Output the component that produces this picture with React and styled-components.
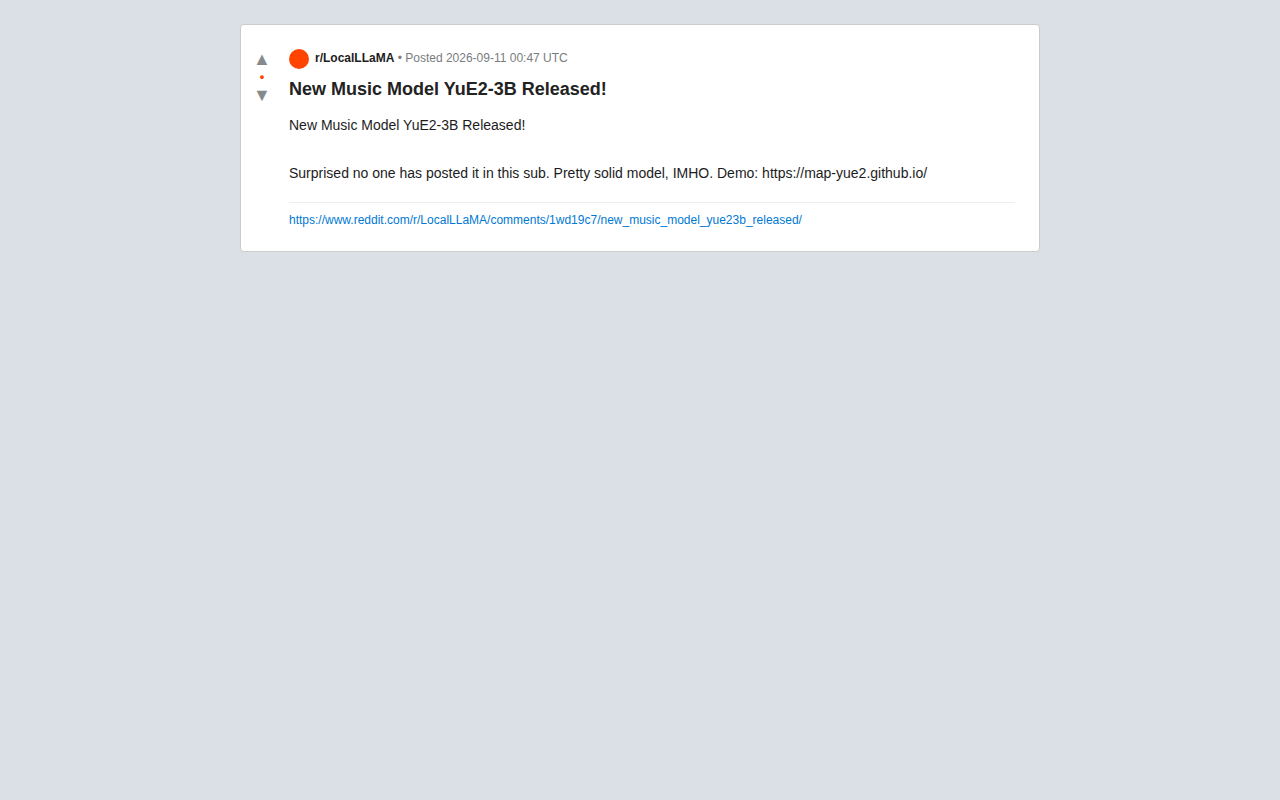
import React from "react";
import styled, { createGlobalStyle } from "styled-components";

const GlobalStyle = createGlobalStyle`
  body {
    margin: 0;
    padding: 24px;
    background: #dae0e6;
    color: #1c1c1c;
    font-family: "Liberation Sans", Arial, sans-serif;
  }
`;

const Card = styled.article`
  display: flex;
  box-sizing: border-box;
  max-width: 800px;
  margin: 0 auto;
  background: #ffffff;
  border: 1px solid #cccccc;
  border-radius: 4px;
  overflow: hidden;
`;

const Votes = styled.div`
  display: flex;
  flex-direction: column;
  align-items: center;
  flex-shrink: 0;
  width: 42px;
  padding: 24px 0;
`;

const VoteButton = styled.button`
  padding: 0;
  border: none;
  background: none;
  color: #878a8c;
  font-family: inherit;
  font-size: 18px;
  line-height: 20px;
  cursor: pointer;
`;

const Score = styled.span`
  color: #ff4500;
  font-size: 13px;
  font-weight: bold;
  line-height: 16px;
`;

const Content = styled.div`
  flex: 1;
  min-width: 0;
  padding: 24px 24px 24px 6px;
`;

const Meta = styled.header`
  display: flex;
  gap: 6px;
  color: #787c7e;
  font-size: 12px;
  line-height: 18px;
`;

const Avatar = styled.span`
  width: 20px;
  height: 20px;
  border-radius: 50%;
  background: #ff4500;
`;

const Subreddit = styled.strong`
  color: #1c1c1c;
`;

const Title = styled.h1`
  margin: 8px 0;
  font-size: 18px;
  line-height: 24px;
  color: #222222;
`;

const Body = styled.div`
  margin-top: 12px;
  font-size: 14px;
  line-height: 24px;
  white-space: pre-wrap;
  overflow-wrap: anywhere;
`;

const Footer = styled.footer`
  margin-top: 17px;
  padding-top: 10px;
  border-top: 1px solid #eeeeee;
  font-size: 12px;
  line-height: 14px;
`;

const Permalink = styled.a`
  color: #0079d3;
  text-decoration: none;
  overflow-wrap: anywhere;
`;

const post = {
  subreddit: "r/LocalLLaMA",
  posted: "Posted 2026-09-11 00:47 UTC",
  title: "New Music Model YuE2-3B Released!",
  body:
    "New Music Model YuE2-3B Released!\n\nSurprised no one has posted it in this sub. Pretty solid model, IMHO. Demo: https://map-yue2.github.io/",
  url: "https://www.reddit.com/r/LocalLLaMA/comments/1wd19c7/new_music_model_yue23b_released/"
};

export default function App() {
  return (
    <>
      <GlobalStyle />
      <Card>
        <Votes>
          <VoteButton type="button" aria-label="Upvote">▲</VoteButton>
          <Score>•</Score>
          <VoteButton type="button" aria-label="Downvote">▼</VoteButton>
        </Votes>
        <Content>
          <Meta>
            <Avatar />
            <span>
              <Subreddit>{post.subreddit}</Subreddit> • {post.posted}
            </span>
          </Meta>
          <Title>{post.title}</Title>
          <Body>{post.body}</Body>
          <Footer>
            <Permalink href={post.url}>{post.url}</Permalink>
          </Footer>
        </Content>
      </Card>
    </>
  );
}
